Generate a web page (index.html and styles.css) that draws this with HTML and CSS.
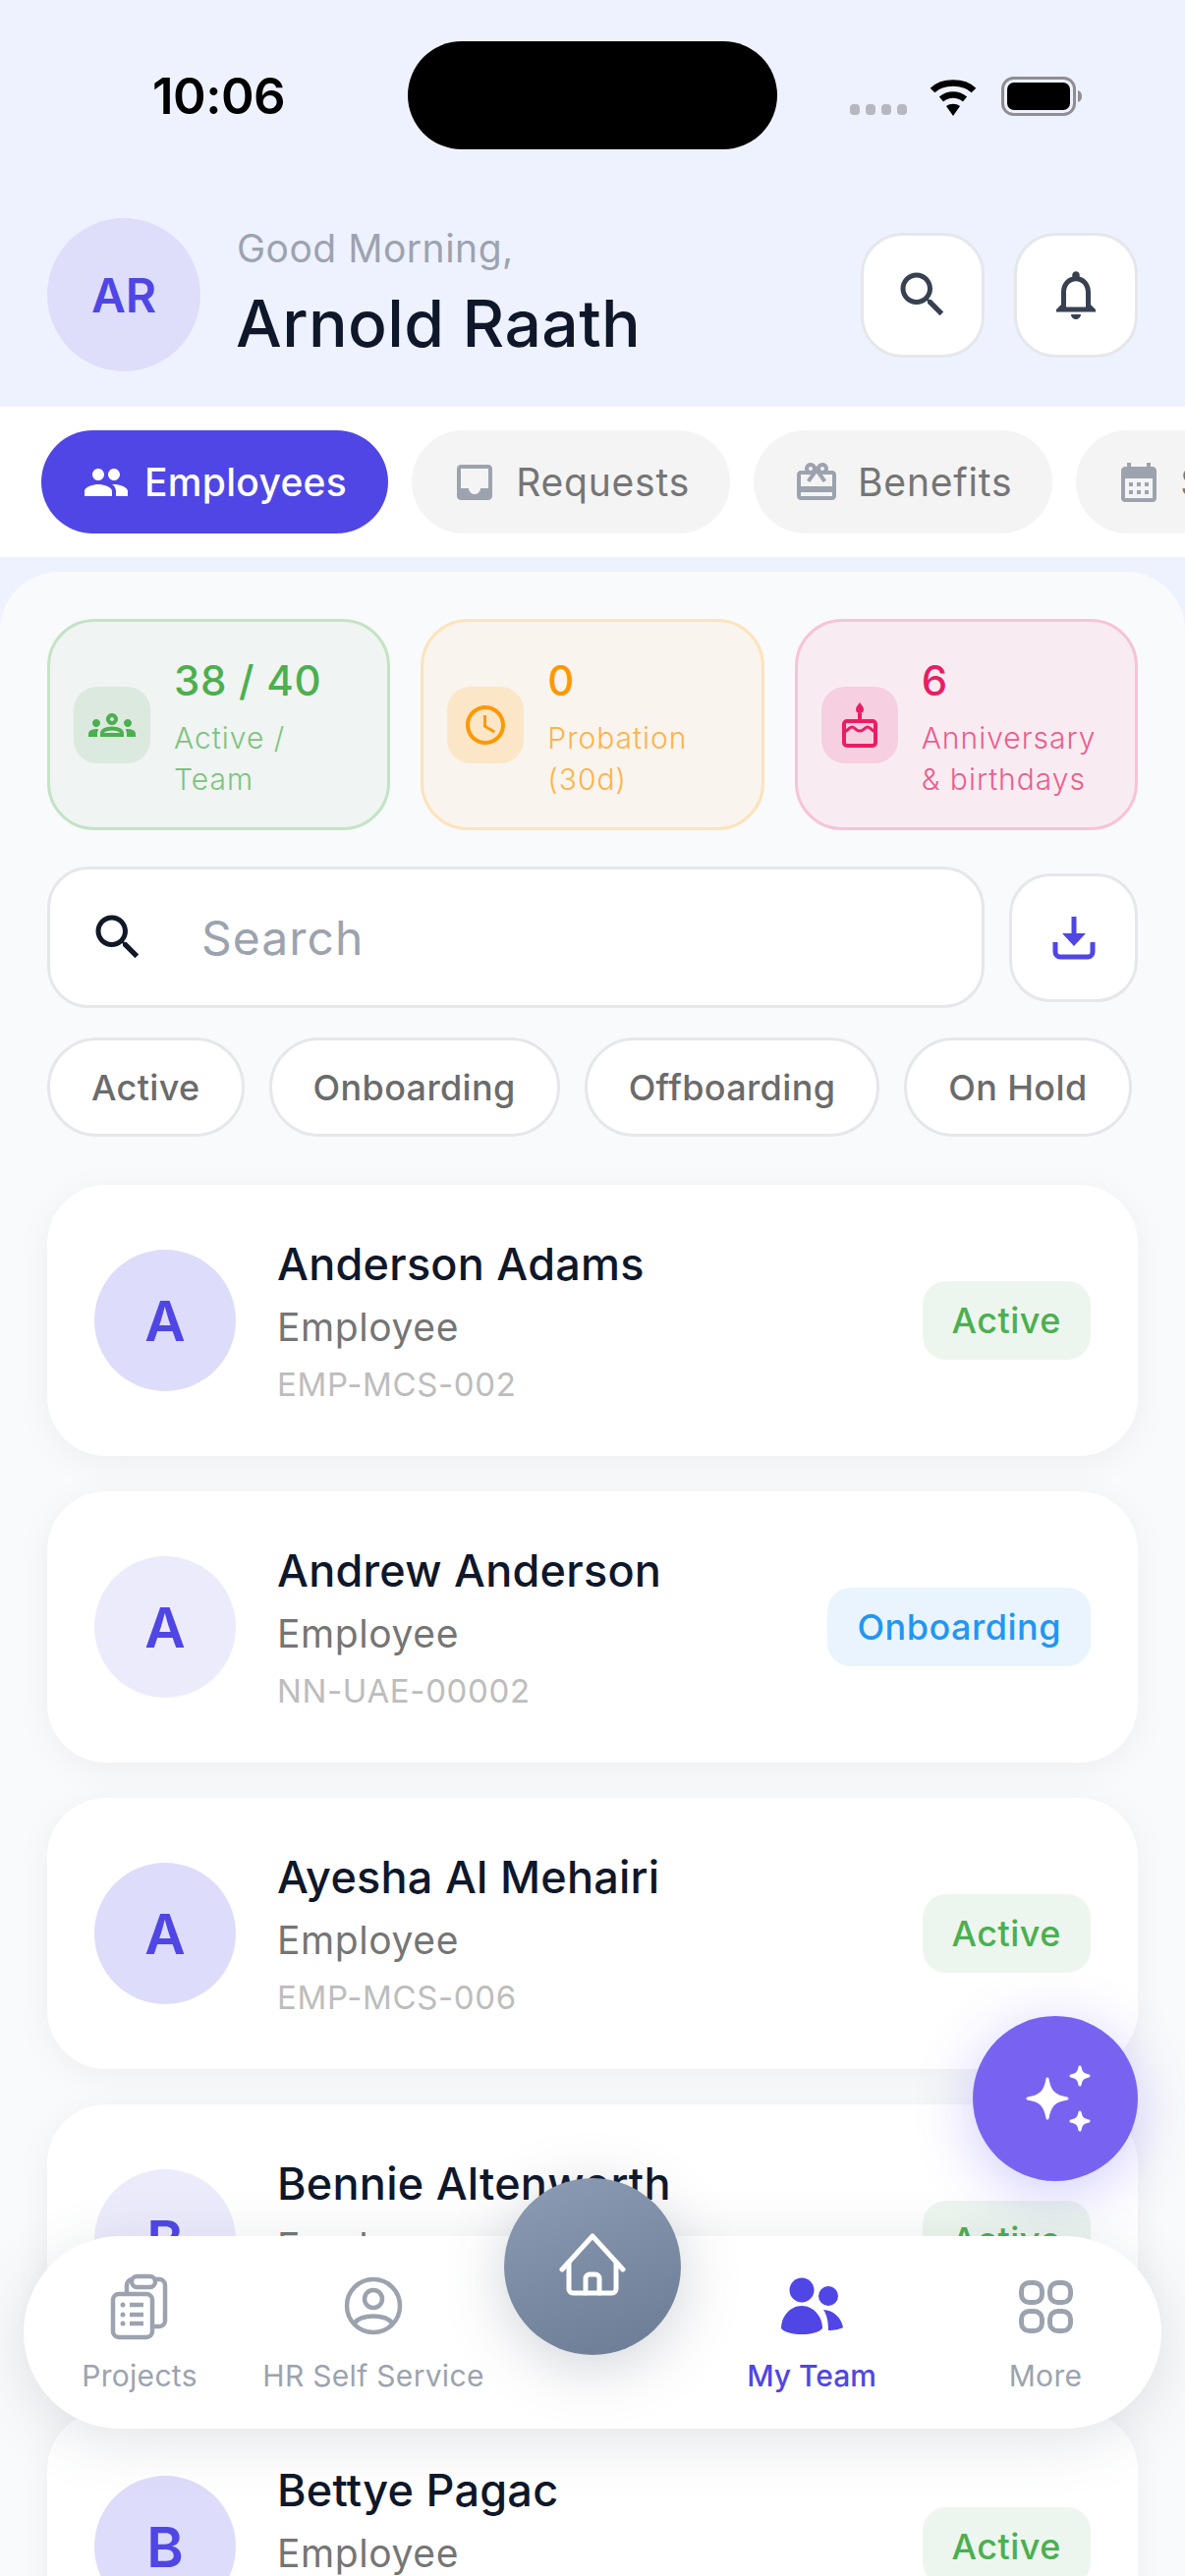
FILE: index.html
```html
<!DOCTYPE html>
<html lang="en">
<head>
<meta charset="utf-8">
<title>My Team</title>
<link rel="stylesheet" href="styles.css">
</head>
<body>
<div class="app">
  <div class="status">
    <span class="time">10:06</span>
    <div class="island"></div>
    <div class="sys">
      <svg class="dots" viewBox="0 0 58 12"><g fill="#b5b8bf"><rect x="0" width="10" height="11" rx="4"/><rect x="16" width="10" height="11" rx="4"/><rect x="32" width="10" height="11" rx="4"/><rect x="48" width="10" height="11" rx="4"/></g></svg>
      <svg class="wifi" viewBox="0 0 52 38"><path d="M26 38 19 28c4-3 10-3 14 0z" fill="#000"/><path d="M14 21c7-6 17-6 24 0M5 12C15 2 37 2 47 12" fill="none" stroke="#000" stroke-width="6.5"/></svg>
      <svg class="battery" viewBox="0 0 82 40"><rect x="1.5" y="1.5" width="73" height="37" rx="11" fill="none" stroke="#8e8e93" stroke-width="3"/><rect x="6" y="6" width="64" height="28" rx="7" fill="#000"/><path d="M78 14c3 1 4 3 4 6s-1 5-4 6z" fill="#8e8e93"/></svg>
    </div>
  </div>

  <header class="head">
    <div class="me">AR</div>
    <div class="hello">
      <div class="greet">Good Morning,</div>
      <div class="who">Arnold Raath</div>
    </div>
    <div class="head-btns">
      <div class="head-btn"><svg class="i60" viewBox="0 0 24 24"><path fill="#374151" d="M15.5 14h-.79l-.28-.27C15.41 12.59 16 11.11 16 9.5 16 5.91 13.09 3 9.5 3S3 5.91 3 9.5 5.91 16 9.5 16c1.61 0 3.09-.59 4.23-1.57l.27.28v.79l5 4.99L20.49 19l-4.99-5zm-6 0C7.01 14 5 11.99 5 9.5S7.01 5 9.5 5 14 7.01 14 9.5 11.99 14 9.5 14z"/></svg></div>
      <div class="head-btn"><svg class="i60" viewBox="0 0 24 24"><path fill="#374151" d="M12 22c1.1 0 2-.9 2-2h-4c0 1.1.9 2 2 2zm6-6v-5c0-3.07-1.63-5.64-4.5-6.32V4c0-.83-.67-1.5-1.5-1.5s-1.5.67-1.5 1.5v.68C7.64 5.36 6 7.92 6 11v5l-2 2v1h16v-1l-2-2zm-2 1H8v-6c0-2.48 1.51-4.5 4-4.5s4 2.02 4 4.5v6z"/></svg></div>
    </div>
  </header>

  <nav class="tabs">
    <div class="tab on"><svg class="i48" viewBox="0 0 24 24"><path fill="#fff" d="M16 11c1.66 0 2.99-1.34 2.99-3S17.66 5 16 5c-1.66 0-3 1.34-3 3s1.34 3 3 3zm-8 0c1.66 0 2.99-1.34 2.99-3S9.66 5 8 5C6.34 5 5 6.34 5 8s1.34 3 3 3zm0 2c-2.33 0-7 1.17-7 3.5V19h14v-2.5c0-2.33-4.67-3.5-7-3.5zm8 0c-.29 0-.62.02-.97.05 1.16.84 1.97 1.97 1.97 3.45V19h6v-2.5c0-2.33-4.67-3.5-7-3.5z"/></svg>Employees</div>
    <div class="tab"><svg class="i48" viewBox="0 0 24 24"><path fill="#9ca3af" d="M19 3H4.99c-1.11 0-1.98.89-1.98 2L3 19c0 1.1.88 2 1.99 2H19c1.1 0 2-.9 2-2V5c0-1.11-.9-2-2-2zm0 12h-4c0 1.66-1.35 3-3 3s-3-1.34-3-3H4.99V5H19v10z"/></svg>Requests</div>
    <div class="tab"><svg class="i48" viewBox="0 0 24 24"><path fill="#9ca3af" d="M20 6h-2.18c.11-.31.18-.65.18-1 0-1.66-1.34-3-3-3-1.05 0-1.96.54-2.5 1.35l-.5.67-.5-.68C10.96 2.54 10.05 2 9 2 7.34 2 6 3.34 6 5c0 .35.07.69.18 1H4c-1.11 0-1.99.89-1.99 2L2 19c0 1.11.89 2 2 2h16c1.11 0 2-.89 2-2V8c0-1.11-.89-2-2-2zm-5-2c.55 0 1 .45 1 1s-.45 1-1 1-1-.45-1-1 .45-1 1-1zM9 4c.55 0 1 .45 1 1s-.45 1-1 1-1-.45-1-1 .45-1 1-1zm11 15H4v-2h16v2zm0-5H4V8h5.08L7 10.83 8.62 12 12 7.4l3.38 4.6L17 10.83 14.92 8H20v6z"/></svg>Benefits</div>
    <div class="tab"><svg class="i48" viewBox="0 0 24 24"><path fill="#9ca3af" d="M19 4h-1V2h-2v2H8V2H6v2H5c-1.11 0-1.99.9-1.99 2L3 20c0 1.1.89 2 2 2h14c1.1 0 2-.9 2-2V6c0-1.1-.9-2-2-2zm0 16H5V10h14v10zM9 14H7v-2h2v2zm4 0h-2v-2h2v2zm4 0h-2v-2h2v2zm-8 4H7v-2h2v2zm4 0h-2v-2h2v2zm4 0h-2v-2h2v2z"/></svg>Schedule</div>
  </nav>

  <main class="panel">
    <section class="stats">
      <div class="stat green">
        <div class="stat-ico"><svg class="i48" viewBox="0 0 24 24"><path fill="#4caf50" d="M4 13c1.1 0 2-.9 2-2s-.9-2-2-2-2 .9-2 2 .9 2 2 2zm1.13 1.1c-.37-.06-.74-.1-1.13-.1-.99 0-1.93.21-2.78.58C.48 14.9 0 15.62 0 16.43V18h4.5v-1.61c0-.83.23-1.61.63-2.29zM20 13c1.1 0 2-.9 2-2s-.9-2-2-2-2 .9-2 2 .9 2 2 2zm4 3.43c0-.81-.48-1.53-1.22-1.85-.85-.37-1.79-.58-2.78-.58-.39 0-.76.04-1.13.1.4.68.63 1.46.63 2.29V18H24v-1.57zm-7.76-2.78c-1.17-.52-2.61-.9-4.24-.9-1.63 0-3.07.39-4.24.9C6.68 14.13 6 15.21 6 16.39V18h12v-1.61c0-1.18-.68-2.26-1.76-2.74zM8.07 16c.09-.23.13-.39.91-.69.97-.38 1.99-.56 3.02-.56s2.05.18 3.02.56c.77.3.81.46.91.69H8.07zM12 8c.55 0 1 .45 1 1s-.45 1-1 1-1-.45-1-1 .45-1 1-1m0-2c-1.66 0-3 1.34-3 3s1.34 3 3 3 3-1.34 3-3-1.34-3-3-3z"/></svg></div>
        <div class="stat-txt"><div class="val">38 / 40</div><div class="lab">Active / Team</div></div>
      </div>
      <div class="stat orange">
        <div class="stat-ico"><svg class="i48" viewBox="0 0 24 24"><path fill="#ff9800" d="M11.99 2C6.47 2 2 6.48 2 12s4.47 10 9.99 10C17.52 22 22 17.52 22 12S17.52 2 11.99 2zM12 20c-4.42 0-8-3.58-8-8s3.58-8 8-8 8 3.58 8 8-3.58 8-8 8zm.5-13H11v6l5.25 3.15.75-1.23-4.5-2.67z"/></svg></div>
        <div class="stat-txt"><div class="val">0</div><div class="lab">Probation (30d)</div></div>
      </div>
      <div class="stat pink">
        <div class="stat-ico"><svg class="cake" viewBox="0 0 40 46"><path fill="#e91e63" d="M20 0c2 3 4 4.500 4 7a4 4 0 0 1-8 0C16 4.500 18 3 20 0z"/><rect x="18" y="11" width="4" height="7" fill="#e91e63"/><rect x="4" y="19" width="32" height="25" rx="3" fill="none" stroke="#e91e63" stroke-width="4"/><path d="M4 30c4-1 5-5 8-5s4 4 8 4 5-4 8-4 4 4 8 5" fill="none" stroke="#e91e63" stroke-width="3"/></svg></div>
        <div class="stat-txt"><div class="val">6</div><div class="lab">Anniversary &amp; birthdays</div></div>
      </div>
    </section>

    <section class="tools">
      <div class="searchbox"><svg class="i60" viewBox="0 0 24 24"><path fill="#111827" d="M15.5 14h-.79l-.28-.27C15.41 12.59 16 11.11 16 9.5 16 5.91 13.09 3 9.5 3S3 5.91 3 9.5 5.91 16 9.5 16c1.61 0 3.09-.59 4.23-1.57l.27.28v.79l5 4.99L20.49 19l-4.99-5zm-6 0C7.01 14 5 11.99 5 9.5S7.01 5 9.5 5 14 7.01 14 9.5 11.99 14 9.5 14z"/></svg><span class="ph">Search</span></div>
      <div class="dl"><svg class="dl-ico" viewBox="0 0 44 46"><path d="M22 2V22" fill="none" stroke="#4f46e5" stroke-width="5"/><path d="M10 19H34L22 32z" fill="#4f46e5"/><path d="M3 28V38a5 5 0 0 0 5 5H36a5 5 0 0 0 5-5V28" fill="none" stroke="#4f46e5" stroke-width="5"/></svg></div>
    </section>

    <section class="filters">
      <div class="chip">Active</div>
      <div class="chip">Onboarding</div>
      <div class="chip">Offboarding</div>
      <div class="chip">On Hold</div>
    </section>

    <section class="list">
      <article class="emp"><div class="ava a1">A</div><div class="info"><div class="name">Anderson Adams</div><div class="role">Employee</div><div class="code">EMP-MCS-002</div></div><div class="badge ok">Active</div></article>
      <article class="emp"><div class="ava a2">A</div><div class="info"><div class="name">Andrew Anderson</div><div class="role">Employee</div><div class="code">NN-UAE-00002</div></div><div class="badge new">Onboarding</div></article>
      <article class="emp"><div class="ava a1">A</div><div class="info"><div class="name">Ayesha Al Mehairi</div><div class="role">Employee</div><div class="code">EMP-MCS-006</div></div><div class="badge ok">Active</div></article>
      <article class="emp"><div class="ava a2">B</div><div class="info"><div class="name">Bennie Altenworth</div><div class="role">Employee</div><div class="code">EMP-MCS-009</div></div><div class="badge ok">Active</div></article>
      <article class="emp"><div class="ava a1">B</div><div class="info"><div class="name">Bettye Pagac</div><div class="role">Employee</div><div class="code">EMP-MCS-011</div></div><div class="badge ok">Active</div></article>
    </section>
  </main>

  <div class="fab"><svg class="spark" viewBox="0 0 70 72"><g fill="#fff" stroke="#fff" stroke-width="3" stroke-linejoin="round"><path d="M24 16C26 29 31 34 44 36 31 38 26 43 24 56 22 43 17 38 4 36 17 34 22 29 24 16z"/><path d="M57 4C58 10 60 12 66 13 60 14 58 16 57 22 56 16 54 14 48 13 54 12 56 10 57 4z"/><path d="M57 50C58 56 60 58 66 59 60 60 58 62 57 68 56 62 54 60 48 59 54 58 56 56 57 50z"/></g></svg></div>

  <div class="bottom">
    <div class="nav-item"><svg class="ni-proj" viewBox="0 0 60 68"><g fill="none" stroke="#9ca3af" stroke-width="4.5" stroke-linejoin="round"><rect x="3" y="21" width="40" height="44" rx="6"/><path d="M17 21V12a6 6 0 0 1 6-6h27a6 6 0 0 1 6 6V48a6 6 0 0 1-6 6H43"/><rect x="22" y="3" width="24" height="11" rx="5.5" fill="#fff"/></g><g stroke="#9ca3af" stroke-width="4.5"><path d="M20 32H34M20 42H34M20 51H34"/></g><g fill="#9ca3af"><circle cx="13" cy="32" r="2.5"/><circle cx="13" cy="42" r="2.5"/><circle cx="13" cy="51" r="2.5"/></g></svg><span class="nav-label">Projects</span></div>
    <div class="nav-item"><svg class="ni-hr" viewBox="0 0 64 64"><g fill="none" stroke="#9ca3af" stroke-width="4.5"><circle cx="32" cy="32" r="27"/><circle cx="32" cy="25" r="9"/><path d="M12 50C20 40 44 40 52 50"/></g></svg><span class="nav-label">HR Self Service</span></div>
    <div class="nav-gap"></div>
    <div class="nav-item act"><svg class="ni-team" viewBox="0 0 72 70"><g fill="#4f46e5"><circle cx="26" cy="19" r="12.5"/><circle cx="53" cy="25" r="10"/><path d="M5 58C5 46 14 35 26 35 38 35 47 46 47 58 40 66 12 66 5 58z"/><path d="M48 39C58 39 67 48 68 57 64 59 60 60 53 60 53 52 52 45 48 39z"/></g></svg><span class="nav-label">My Team</span></div>
    <div class="nav-item"><svg class="ni-more" viewBox="0 0 60 60"><g fill="none" stroke="#9ca3af" stroke-width="5"><rect x="5.5" y="5.5" width="21" height="20" rx="8"/><rect x="34.5" y="5.5" width="21" height="20" rx="8"/><rect x="5.5" y="34.5" width="21" height="20" rx="8"/><rect x="34.5" y="34.5" width="21" height="20" rx="8"/></g></svg><span class="nav-label">More</span></div>
    <div class="home"><svg class="ni-home" viewBox="0 0 72 68"><g fill="none" stroke="#fff" stroke-width="5" stroke-linecap="round" stroke-linejoin="round"><path d="M5 38 36 4 67 38"/><path d="M12 31V58a4 4 0 0 0 4 4H56a4 4 0 0 0 4-4V31"/><path d="M29 62V47a4 4 0 0 1 4-4h6a4 4 0 0 1 4 4V62"/></g></svg></div>
  </div>
</div>
</body>
</html>
```

FILE: styles.css
```css
* { box-sizing: border-box; }
html, body { margin: 0; padding: 0; }
body { width: 1206px; height: 2622px; overflow: hidden; font-family: Inter, "Noto Sans", sans-serif; }
.app { position: relative; width: 1206px; height: 2622px; overflow: hidden; background: #eef2ff; }

.status { display: flex; align-items: center; height: 222px; padding: 42px 0 70px 155px; }
.time { width: 135px; font-size: 51px; font-weight: 600; color: #000; letter-spacing: -0.5px; line-height: 1; }
.island { width: 376px; height: 110px; margin-left: 125px; border-radius: 55px; background: #000; }
.sys { display: flex; align-items: flex-end; height: 40px; margin-left: 74px; margin-top: 2px; }
.dots { width: 58px; height: 12px; }
.wifi { width: 52px; height: 38px; margin-left: 21px; }
.battery { width: 82px; height: 40px; margin-left: 23px; }

.head { display: flex; align-items: center; height: 192px; padding: 0 48px 36px 48px; }
.me { width: 156px; height: 156px; flex: none; border-radius: 50%; background: #dedefb; color: #4f46e5; font-size: 48px; font-weight: 600; display: flex; align-items: center; justify-content: center; }
.hello { flex: 1; margin-left: 37px; }
.greet { font-size: 39px; line-height: 48px; color: #9ca3af; letter-spacing: 0.5px; margin-top: -2px; }
.who { font-size: 66px; line-height: 80px; font-weight: 500; color: #0f172a; letter-spacing: .4px; margin-top: 12px; margin-left: -1px; }
.head-btns { display: flex; gap: 30px; }
.head-btn { width: 126px; height: 127px; border-radius: 42px; background: #fff; border: 3px solid #e5e7eb; display: flex; align-items: center; justify-content: center; }
.i60 { width: 60px; height: 60px; flex: none; }
.i48 { width: 48px; height: 48px; flex: none; }

.tabs { display: flex; gap: 24px; height: 153px; padding: 24px 0 24px 42px; background: #fff; overflow: hidden; }
.tab { display: flex; flex: none; align-items: center; gap: 18px; height: 105px; padding: 0 41px 0 40px; border-radius: 53px; background: #f4f4f4; color: #757575; font-size: 39px; letter-spacing: .8px; }
.tab.on { background: #4f46e5; color: #fff; font-weight: 500; letter-spacing: 0.3px; padding: 0 42px; gap: 15px; }

.panel { margin-top: 15px; height: 2040px; padding: 48px; border-radius: 60px 60px 0 0; background: #f9fafb; }

.stats { display: grid; grid-template-columns: repeat(3, 1fr); gap: 31px; height: 215px; }
.stat { display: flex; align-items: center; gap: 24px; padding: 0 24px; border-radius: 48px; border: 3px solid; }
.stat.green { background: #f0f4f2; border-color: #c3e3c5; color: #4caf50; }
.stat.orange { background: #f9f4ee; border-color: #fde3bc; color: #ff9800; }
.stat.pink { background: #f8ecf2; border-color: #f7c3d6; color: #e91e63; }
.stat-ico { width: 78px; height: 78px; flex: none; border-radius: 24px; display: flex; align-items: center; justify-content: center; }
.green .stat-ico { background: #dbe9df; }
.orange .stat-ico { background: #fbe6c8; }
.pink .stat-ico { background: #f6cfe0; }
.cake { width: 40px; height: 46px; }
.stat-txt { padding-top: 6px; min-width: 0; }
.val { font-size: 42px; line-height: 50px; font-weight: 500; letter-spacing: .7px; }
.lab { font-size: 30px; line-height: 42px; opacity: .7; letter-spacing: 1px; margin-top: 12px; font-weight: 300; }

.tools { display: flex; align-items: center; gap: 25px; height: 144px; margin-top: 37px; }
.searchbox { display: flex; align-items: center; flex: 1; height: 144px; padding-left: 39px; border-radius: 42px; background: #fff; border: 3px solid #e5e7eb; }
.ph { margin-left: 55px; font-size: 48px; color: #9ca3af; letter-spacing: 1px; }
.dl { width: 131px; height: 131px; flex: none; border-radius: 42px; background: #fff; border: 3px solid #e5e7eb; display: flex; align-items: center; justify-content: center; }
.dl-ico { width: 44px; height: 46px; }

.filters { display: flex; gap: 25px; margin-top: 30px; }
.chip { display: flex; align-items: center; height: 101px; padding: 0 42px; border-radius: 51px; background: #fff; border: 3px solid #e5e7eb; color: #6b6b6b; font-size: 36px; font-weight: 500; letter-spacing: .35px; white-space: nowrap; }

.list { display: flex; flex-direction: column; gap: 36px; margin-top: 49px; }
.emp { display: flex; align-items: center; flex: none; height: 276px; padding: 0 48px; border-radius: 60px; background: #fff; box-shadow: 0 6px 36px rgba(17, 24, 39, .05); }
.ava { width: 144px; height: 144px; flex: none; border-radius: 50%; display: flex; align-items: center; justify-content: center; color: #4f46e5; font-size: 57px; font-weight: 600; }
.a1 { background: #dddcfa; }
.a2 { background: #ecebfc; }
.info { flex: 1; margin-left: 42px; }
.name { font-size: 45px; line-height: 56px; font-weight: 500; color: #0f172a; letter-spacing: .25px; }
.role { font-size: 39px; line-height: 48px; margin-top: 12px; color: #757575; letter-spacing: .6px; }
.code { font-size: 33px; line-height: 40px; margin-top: 14px; color: #bdbdbd; letter-spacing: .65px; }
.badge { display: flex; align-items: center; height: 80px; padding: 0 30px; border-radius: 24px; font-size: 36px; font-weight: 500; letter-spacing: .5px; }
.badge.ok { background: #edf6ee; color: #4caf50; }
.badge.new { background: #e9f4fe; color: #2196f3; }

.fab { position: absolute; left: 990px; top: 2052px; width: 168px; height: 168px; border-radius: 50%; background: #7863f1; box-shadow: 0 12px 60px rgba(99, 82, 241, .3); display: flex; align-items: center; justify-content: center; }
.spark { width: 70px; height: 72px; margin-left: 6px; }

.bottom { position: absolute; left: 24px; top: 2276px; width: 1158px; height: 196px; display: grid; grid-template-columns: 236px 240px 1fr 240px 236px; border-radius: 98px; background: #fff; box-shadow: 0 12px 60px rgba(71, 85, 105, .16); }
.nav-item { position: relative; display: flex; flex-direction: column; align-items: center; justify-content: flex-end; padding-bottom: 34px; color: #9ca3af; font-size: 30px; line-height: 40px; letter-spacing: .3px; white-space: nowrap; }
.nav-item.act { color: #4f46e5; font-weight: 500; letter-spacing: 0; }
.nav-item svg { position: absolute; }
.ni-proj { width: 60px; height: 68px; top: 38px; }
.ni-hr { width: 64px; height: 64px; top: 39px; }
.ni-team { width: 72px; height: 70px; top: 36px; }
.ni-more { width: 60px; height: 60px; top: 42px; }
.home { position: absolute; left: 489px; top: -59px; width: 180px; height: 180px; border-radius: 50%; background: linear-gradient(160deg, #8c9cb4, #6b7b93); box-shadow: 0 12px 60px rgba(71, 85, 105, .25); display: flex; align-items: center; justify-content: center; }
.ni-home { width: 72px; height: 68px; margin-top: -2px; }
```
